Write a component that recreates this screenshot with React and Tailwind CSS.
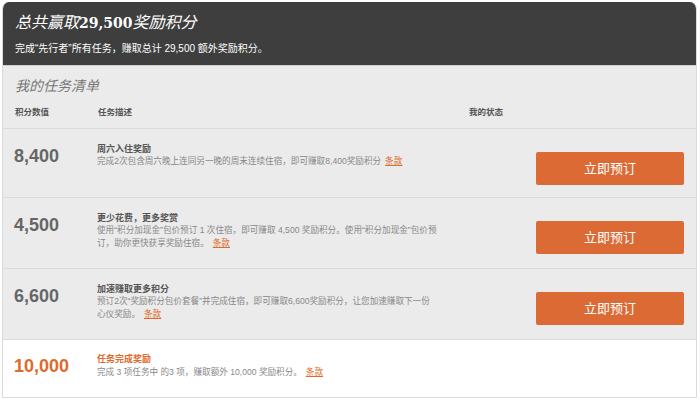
import React from 'react';

const cjk = { fontFamily: '"Liberation Sans", "Noto Sans CJK SC", sans-serif' };

const tasks = [
  {
    points: '8,400',
    title: '周六入住奖励',
    desc: '完成2次包含周六晚上连同另一晚的周末连续住宿，即可赚取8,400奖励积分',
    h: 'h-[69px]',
  },
  {
    points: '4,500',
    title: '更少花费，更多奖赏',
    desc: '使用“积分加现金”包价预订 1 次住宿，即可赚取 4,500 奖励积分。使用“积分加现金”包价预订，助你更快获享奖励住宿。',
    h: 'h-[71px]',
  },
  {
    points: '6,600',
    title: '加速赚取更多积分',
    desc: '预订2次“奖励积分包价套餐”并完成住宿，即可赚取6,600奖励积分，让您加速赚取下一份心仪奖励。',
    h: 'h-[71px]',
  },
];

function Terms() {
  return (
    <a href="#" className="inline-block align-top leading-[13px] text-[#e06a2c] underline underline-offset-1 ml-[4px]">
      条款
    </a>
  );
}

function TaskRow({ points, title, desc, h }) {
  return (
    <div className={`flex ${h} border-b border-[#dadada] pt-[14px]`}>
      <div className="w-[94px] pl-[11px] pt-[4px] text-[18px] leading-[18px] font-bold text-[#666]">{points}</div>
      <div className="w-[340px]">
        <div className="text-[9px] leading-[12px] font-bold text-[#555]">{title}</div>
        <p className="text-[8.6px] leading-[13px] text-[#888]">
          {desc}
          <Terms />
        </p>
      </div>
      <div className="flex-1 flex justify-end pr-[12px] pt-[9px]">
        <button className="w-[148px] h-[33px] rounded-[2px] bg-[#dc6a35] text-white text-[13px]">立即预订</button>
      </div>
    </div>
  );
}

export default function App() {
  return (
    <div className="w-[700px] h-[401px] bg-white pt-[2px] pl-[2px]" style={cjk}>
      <div className="w-[695px] h-[396px] rounded-t-[7px] border-x border-b border-[#dadada] overflow-hidden">
        <div className="h-[64px] bg-[#3e3e3e] border-b border-[#cfcfcf] px-[12px] pt-[11px]">
          <h1
            className="text-white text-[16px] leading-[20px] italic"
            style={{ fontFamily: '"Liberation Serif", "Noto Sans CJK SC", serif' }}
          >
            总共赢取<span className="font-bold not-italic text-[14px]" style={{ fontFamily: '"DejaVu Serif", serif' }}>29,500</span>奖励积分
          </h1>
          <p className="text-white text-[10px] leading-[14px] mt-[9px]">完成“先行者”所有任务，赚取总计 29,500 额外奖励积分。</p>
        </div>
        <div className="bg-[#ebebeb]">
          <div className="h-[63px] border-b border-[#dadada] px-[12px] pt-[12px]">
            <div
              className="text-[14px] leading-[18px] italic text-[#777]"
              style={{ fontFamily: '"Liberation Serif", "Noto Sans CJK SC", serif' }}
            >
              我的任务清单
            </div>
            <div className="flex mt-[10px] text-[8.5px] leading-[12px] font-bold text-[#555]">
              <div className="w-[83px]">积分数值</div>
              <div className="w-[371px]">任务描述</div>
              <div>我的状态</div>
            </div>
          </div>
          {tasks.map((t) => (
            <TaskRow key={t.points} {...t} />
          ))}
        </div>
        <div className="flex h-[57px] bg-white pt-[13px]">
          <div className="w-[94px] pl-[11px] pt-[4px] text-[18px] leading-[18px] font-bold text-[#e06a2c]">10,000</div>
          <div className="w-[340px]">
            <div className="text-[9px] leading-[12px] font-bold text-[#e06a2c]">任务完成奖励</div>
            <p className="text-[8.6px] leading-[13px] text-[#888] mt-[1px]">
              完成 3 项任务中 的3 项，赚取额外 10,000 奖励积分。
              <Terms />
            </p>
          </div>
        </div>
      </div>
    </div>
  );
}
